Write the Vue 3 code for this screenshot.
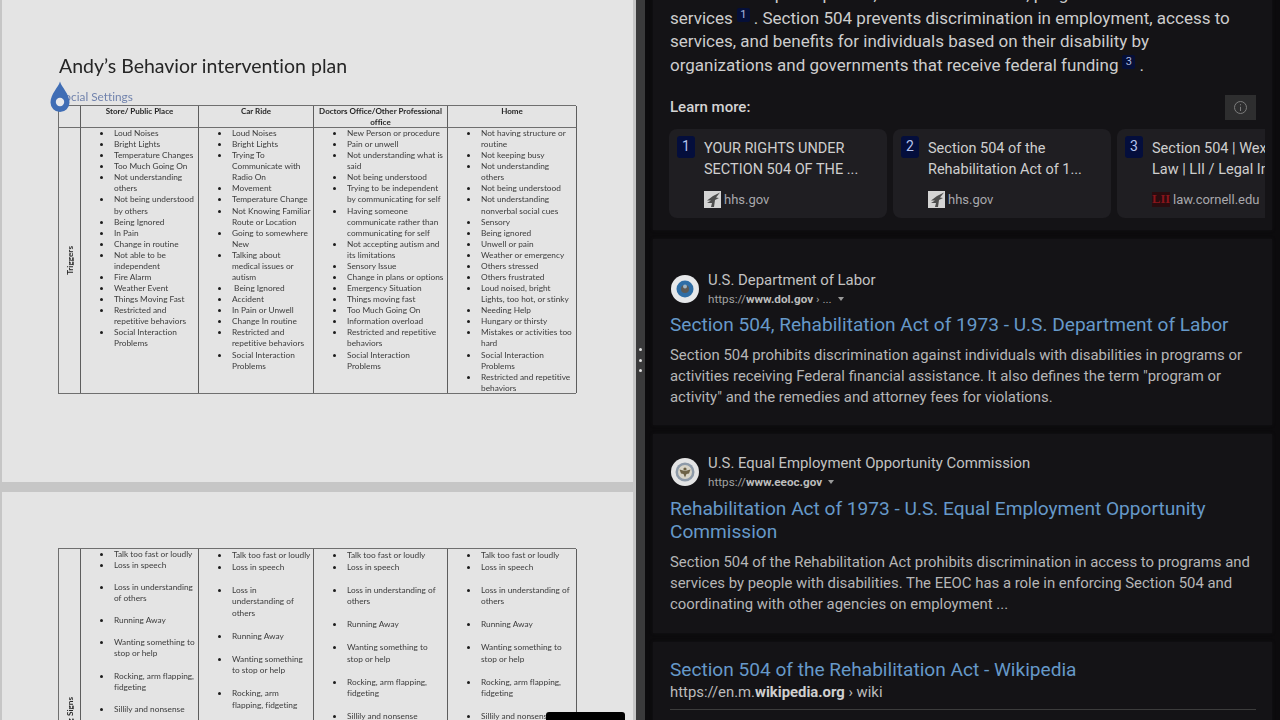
<script setup>
const slideOneHeads = ['Store/ Public Place', 'Car Ride', 'Doctors Office/Other Professional\noffice', 'Home']
const triggers = [
  ['Loud Noises', 'Bright Lights', 'Temperature Changes', 'Too Much Going On', 'Not understanding\nothers', 'Not being understood\nby others', 'Being Ignored', 'In Pain', 'Change in routine', 'Not able to be\nindependent', 'Fire Alarm', 'Weather Event', 'Things Moving Fast', 'Restricted and\nrepetitive behaviors', 'Social Interaction\nProblems'],
  ['Loud Noises', 'Bright Lights', 'Trying To\nCommunicate with\nRadio On', 'Movement', 'Temperature Change', 'Not Knowing Familiar\nRoute or Location', 'Going to somewhere\nNew', 'Talking about\nmedical issues or\nautism', ' Being Ignored', 'Accident', 'In Pain or Unwell', 'Change In routine', 'Restricted and\nrepetitive behaviors', 'Social Interaction\nProblems'],
  ['New Person or procedure', 'Pain or unwell', 'Not understanding what is\nsaid', 'Not being understood', 'Trying to be independent\nby communicating for self', 'Having someone\ncommunicate rather than\ncommunicating for self', 'Not accepting autism and\nits limitations', 'Sensory Issue', 'Change in plans or options', 'Emergency Situation', 'Things moving fast', 'Too Much Going On', 'Information overload', 'Restricted and repetitive\nbehaviors', 'Social Interaction\nProblems'],
  ['Not having structure or\nroutine', 'Not keeping busy', 'Not understanding\nothers', 'Not being understood', 'Not understanding\nnonverbal social cues', 'Sensory', 'Being ignored', 'Unwell or pain', 'Weather or emergency', 'Others stressed', 'Others frustrated', 'Loud noised, bright\nLights, too hot, or stinky', 'Needing Help', 'Hungary or thirsty', 'Mistakes or activities too\nhard', 'Social Interaction\nProblems', 'Restricted and repetitive\nbehaviors']
]
const signsA = ['Loss in understanding\nof others', 'Running Away', 'Wanting something to\nstop or help', 'Rocking, arm flapping,\nfidgeting', 'Sillily and nonsense']
const signsB = ['Loss in\nunderstanding of\nothers', 'Running Away', 'Wanting something\nto stop or help', 'Rocking, arm\nflapping, fidgeting', 'Sillily and nonsense']
const signsC = ['Loss in understanding of\nothers', 'Running Away', 'Wanting something to\nstop or help', 'Rocking, arm flapping,\nfidgeting', 'Sillily and nonsense']
const signs = [
  { cls: 'tight', rows: signsA },
  { cls: 'loose', rows: signsB },
  { cls: 'loose', rows: signsC },
  { cls: 'loose', rows: signsC }
]
const sources = [
  { n: 1, title: 'YOUR RIGHTS UNDER\nSECTION 504 OF THE ...', site: 'hhs.gov', kind: 'hhs' },
  { n: 2, title: 'Section 504 of the\nRehabilitation Act of 1...', site: 'hhs.gov', kind: 'hhs' },
  { n: 3, title: 'Section 504 | Wex | US\nLaw | LII / Legal Information', site: 'law.cornell.edu', kind: 'lii' }
]
</script>

<template>
  <div class="page">
    <section class="left">
      <div class="slide first">
        <h1 class="plan-title">Andy’s Behavior intervention plan</h1>
        <div class="subtitle">
          <svg class="drop" width="20" height="32" viewBox="0 0 20 32">
            <path d="M10 0.5 C11.5 6 19.5 13 19.5 21.5 A9.5 9.5 0 0 1 0.5 21.5 C0.5 13 8.5 6 10 0.5 Z" fill="#3f6db5" />
            <circle cx="10" cy="21" r="4.2" fill="#e6e8ec" />
          </svg>
          Social Settings
        </div>
        <div class="table">
          <div class="cell corner"></div>
          <div v-for="h in slideOneHeads" :key="h" class="cell head">{{ h }}</div>
          <div class="cell side"><span class="vert">Triggers</span></div>
          <div v-for="(col, i) in triggers" :key="i" class="cell body">
            <ul class="bullets tight">
              <li v-for="(t, j) in col" :key="j">{{ t }}</li>
            </ul>
          </div>
        </div>
      </div>
      <div class="slide second">
        <div class="table signs">
          <div class="cell side"><span class="vert">Warning Signs</span></div>
          <div v-for="(col, i) in signs" :key="i" class="cell body">
            <ul class="bullets" :class="col.cls">
              <li>Talk too fast or loudly</li>
              <li class="spaced">Loss in speech</li>
              <li v-for="(t, j) in col.rows" :key="j" class="spaced">{{ t }}</li>
            </ul>
          </div>
        </div>
      </div>
      <div class="blackout"></div>
    </section>

    <div class="divider"><i></i><i></i><i></i></div>

    <section class="right">
      <div class="panel answer">
        <p class="para">disabilities to participate in, and have access to, program benefits and<br>services<span class="cite">1</span>. Section 504 prevents discrimination in employment, access to<br>services, and benefits for individuals based on their disability by<br>organizations and governments that receive federal funding<span class="cite">3</span>.</p>
        <div class="learn">
          <strong>Learn more:</strong>
          <span class="info">
            <svg width="15" height="15" viewBox="0 0 15 15" fill="none" stroke="#7c7c7c" stroke-width="1">
              <circle cx="7.5" cy="7.5" r="6" />
              <path d="M7.5 6.8V11M7.5 4.2V5.3" />
            </svg>
          </span>
        </div>
        <div class="cards">
          <article v-for="s in sources" :key="s.n" class="card">
            <span class="badge">{{ s.n }}</span>
            <div class="card-body">
              <div class="card-title">{{ s.title }}</div>
              <div class="site">
                <svg v-if="s.kind === 'hhs'" width="17" height="17" viewBox="0 0 17 17">
                  <rect width="17" height="17" fill="#d4d4d4" />
                  <path d="M16 1.5 L9 5 L3 9.5 L7 9.5 L3 12 L8 12 L7 16 L10 16 L11 9 L15 7 L12 6.5 Z" fill="#4d4d4d" />
                </svg>
                <span v-else class="lii">LII</span>
                <span class="site-name">{{ s.site }}</span>
              </div>
            </div>
          </article>
        </div>
      </div>

      <div class="panel result dol">
        <div class="res-head">
          <svg class="seal" width="28" height="28" viewBox="0 0 28 28">
            <circle cx="14" cy="14" r="14" fill="#e6e8ea" />
            <circle cx="14" cy="14" r="8.5" fill="#2f6ea6" />
            <circle cx="14" cy="14" r="4" fill="#5d5a55" />
            <circle cx="14" cy="11.5" r="2" fill="#9fb4c4" />
          </svg>
          <div>
            <div class="org">U.S. Department of Labor</div>
            <div class="url">https://<b>www.dol.gov</b> › ... <span class="caret"></span></div>
          </div>
        </div>
        <a class="link">Section 504, Rehabilitation Act of 1973 - U.S. Department of Labor</a>
        <p class="snippet">Section 504 prohibits discrimination against individuals with disabilities in programs or<br>activities receiving Federal financial assistance. It also defines the term "program or<br>activity" and the remedies and attorney fees for violations.</p>
      </div>

      <div class="panel result eeoc">
        <div class="res-head">
          <svg class="seal" width="28" height="28" viewBox="0 0 28 28">
            <circle cx="14" cy="14" r="14" fill="#e4e4e4" />
            <circle cx="14" cy="14" r="9.5" fill="#8e9aa8" />
            <circle cx="14" cy="14" r="7" fill="#d9d5c8" />
            <path d="M8.5 11.5 L14 13 L19.5 11.5 L18 15.5 L15.5 16 L14 19.5 L12.5 16 L10 15.5 Z" fill="#6d6246" />
            <circle cx="14" cy="11" r="1.6" fill="#6d6246" />
          </svg>
          <div>
            <div class="org">U.S. Equal Employment Opportunity Commission</div>
            <div class="url">https://<b>www.eeoc.gov</b> <span class="caret"></span></div>
          </div>
        </div>
        <a class="link">Rehabilitation Act of 1973 - U.S. Equal Employment Opportunity<br>Commission</a>
        <p class="snippet">Section 504 of the Rehabilitation Act prohibits discrimination in access to programs and<br>services by people with disabilities. The EEOC has a role in enforcing Section 504 and<br>coordinating with other agencies on employment ...</p>
      </div>

      <div class="panel result wiki">
        <a class="link">Section 504 of the Rehabilitation Act - Wikipedia</a>
        <div class="wiki-url">https://en.m.<b>wikipedia.org</b> › wiki</div>
        <div class="rule"></div>
      </div>
    </section>
  </div>
</template>

<style>
html, body { margin: 0; background: #0c0b0d; }
</style>

<style scoped>
.page {
  position: relative;
  display: flex;
  width: 1280px;
  height: 720px;
  overflow: hidden;
  background: #0c0b0d;
  font-family: Roboto, "Liberation Sans", sans-serif;
}

/* document pane */
.left {
  position: relative;
  width: 636px;
  height: 720px;
  flex: none;
  overflow: hidden;
  box-sizing: border-box;
  padding: 0 3px 0 2px;
  background: #c6c6c6;
  font-family: Lato, "Liberation Sans", sans-serif;
  font-variant-ligatures: none;
  color: #303030;
}
.slide {
  box-sizing: border-box;
  padding-left: 56px;
  background: #e4e4e4;
  filter: blur(0.3px);
}
.first { height: 482px; margin-bottom: 10px; padding-top: 52px; }
.second { height: 228px; padding-top: 56px; overflow: hidden; }
.plan-title {
  margin: 0 0 0 1px;
  font-size: 19.5px;
  line-height: 28px;
  font-weight: 400;
  color: #262626;
}
.subtitle {
  position: relative;
  margin-top: 9px;
  height: 16px;
  line-height: 16px;
  font-size: 11.8px;
  color: #7183ad;
}
.drop { position: absolute; left: -8.5px; top: -8px; }
.table {
  display: grid;
  grid-template-columns: 22px 118px 115px 134px 129px;
  grid-template-rows: 22px 265px;
  width: 518px;
  box-sizing: border-box;
  border-top: 1px solid #6f6f6f;
  border-bottom: 1px solid #6f6f6f;
  border-left: 1px solid #6f6f6f;
}
.signs { grid-template-rows: 348px; }
.cell {
  box-sizing: border-box;
  border-right: 1px solid #5d5d5d;
}
.head, .corner { border-bottom: 1px solid #6f6f6f; }
.head {
  text-align: center;
  white-space: pre-line;
  font-size: 8px;
  line-height: 11px;
  font-weight: 700;
  color: #262626;
}
.side { display: flex; align-items: center; justify-content: center; }
.vert {
  writing-mode: vertical-rl;
  transform: rotate(180deg);
  font-size: 8.2px;
  font-weight: 700;
  color: #262626;
  white-space: nowrap;
}
.body { overflow: hidden; }
.bullets {
  margin: 0;
  padding: 0 0 0 33px;
  list-style: none;
  font-size: 8.3px;
  color: #3c3c3c;
}
.bullets li {
  position: relative;
  white-space: pre;
}
.bullets li::before {
  content: "";
  position: absolute;
  left: -14px;
  top: 4px;
  width: 3px;
  height: 3px;
  border-radius: 50%;
  background: #1c1c1c;
}
.tight { line-height: 11.08px; }
.tight .spaced { margin-bottom: 11px; }
.loose { padding-top: 1px; line-height: 11.5px; }
.loose .spaced { margin-bottom: 11.5px; }
.blackout {
  position: absolute;
  left: 546px;
  bottom: 0;
  width: 79px;
  height: 8px;
  background: #000;
  border-radius: 3px 3px 0 0;
}

/* divider */
.divider {
  width: 9px;
  height: 720px;
  flex: none;
  display: flex;
  flex-direction: column;
  align-items: center;
  justify-content: center;
  gap: 7.5px;
  background: #3a3a3b;
}
.divider i {
  width: 3px;
  height: 3px;
  background: #e2e2e2;
  border-radius: 50%;
}

/* search pane */
.right {
  width: 635px;
  flex: none;
  box-sizing: border-box;
  padding: 0 8px;
  display: flex;
  flex-direction: column;
  gap: 9px;
}
.panel {
  box-sizing: border-box;
  flex: none;
  padding-left: 17px;
  padding-right: 16px;
  background: #141316;
  box-shadow: 0 0 3px #141316;
}
.answer { height: 247px; margin-top: -17px; }
.para {
  margin: 0;
  font-size: 17px;
  line-height: 23.5px;
  color: #cdcdcd;
  white-space: nowrap;
}
.cite {
  display: inline-block;
  width: 13px;
  height: 14px;
  margin: 0 4px 0 4px;
  background: #050f38;
  border-radius: 2px;
  color: #aebbe0;
  font-size: 11px;
  line-height: 14px;
  text-align: center;
  vertical-align: 6px;
}
.learn {
  display: flex;
  align-items: center;
  justify-content: space-between;
  height: 25px;
  margin-top: 17.5px;
  font-size: 15px;
  color: #d4d4d4;
}
.learn strong { font-weight: 500; }
.info {
  display: flex;
  align-items: center;
  justify-content: center;
  width: 31px;
  height: 25px;
  background: #2e2e2f;
}
.cards {
  display: flex;
  gap: 6px;
  width: 596px;
  margin: 9px 0 0 -1px;
  overflow: hidden;
}
.card {
  display: flex;
  flex: 0 0 218px;
  box-sizing: border-box;
  height: 89px;
  padding: 7px 0 0 8px;
  background: #1f1e22;
  border-radius: 8px;
}
.badge {
  flex: none;
  width: 18px;
  height: 22px;
  line-height: 20px;
  text-align: center;
  font-size: 14px;
  color: #b4c3ee;
  background: #040e3c;
  border-radius: 3px;
}
.card-body { margin-left: 9px; padding-top: 2.5px; min-width: 0; }
.card-title {
  font-size: 14.5px;
  line-height: 21px;
  color: #cfcfcf;
  white-space: pre;
}
.site {
  display: flex;
  align-items: center;
  gap: 3px;
  height: 17px;
  margin-top: 10.5px;
}
.site-name { font-size: 13px; color: #a8a8ac; }
.lii {
  flex: none;
  width: 18px;
  font-family: "Liberation Serif", serif;
  font-weight: 700;
  font-size: 12.6px;
  line-height: 15px;
  text-align: center;
  white-space: nowrap;
  color: #8a151c;
  background: #2a0c0f;
  overflow: hidden;
}
.dol { height: 186px; padding-top: 30.5px; }
.eeoc { height: 199px; padding-top: 18.5px; }
.eeoc .link { margin-top: 6px; }
.wiki { height: 90px; padding-top: 16px; }
.res-head { display: flex; align-items: center; gap: 9px; margin-left: 1px; height: 38px; }
.seal { flex: none; }
.org { font-size: 14.9px; line-height: 20px; color: #c2c2c2; }
.url { font-size: 11.7px; line-height: 18px; color: #a2a2a2; }
.url b { color: #bdbdbd; font-weight: 700; }
.caret {
  display: inline-block;
  width: 0;
  height: 0;
  margin-left: 3px;
  vertical-align: 2px;
  border: 3.5px solid transparent;
  border-top: 4px solid #9a9a9a;
  border-bottom: 0;
}
.link {
  display: block;
  margin-top: 5px;
  font-size: 19.1px;
  line-height: 23.5px;
  color: #6699c9;
  white-space: nowrap;
}
.wiki .link { margin-top: 0; }
.snippet {
  margin: 9px 0 0;
  font-size: 14.9px;
  line-height: 21.1px;
  color: #b6b6b6;
  white-space: nowrap;
}
.eeoc .snippet { margin-top: 8.5px; }
.wiki-url { margin-top: 0.5px; font-size: 14.85px; line-height: 20px; color: #bcbcbc; }
.wiki-url b { color: #cfcfcf; font-weight: 700; }
.rule { height: 1px; margin-top: 7px; background: #3c3c3c; }
</style>
